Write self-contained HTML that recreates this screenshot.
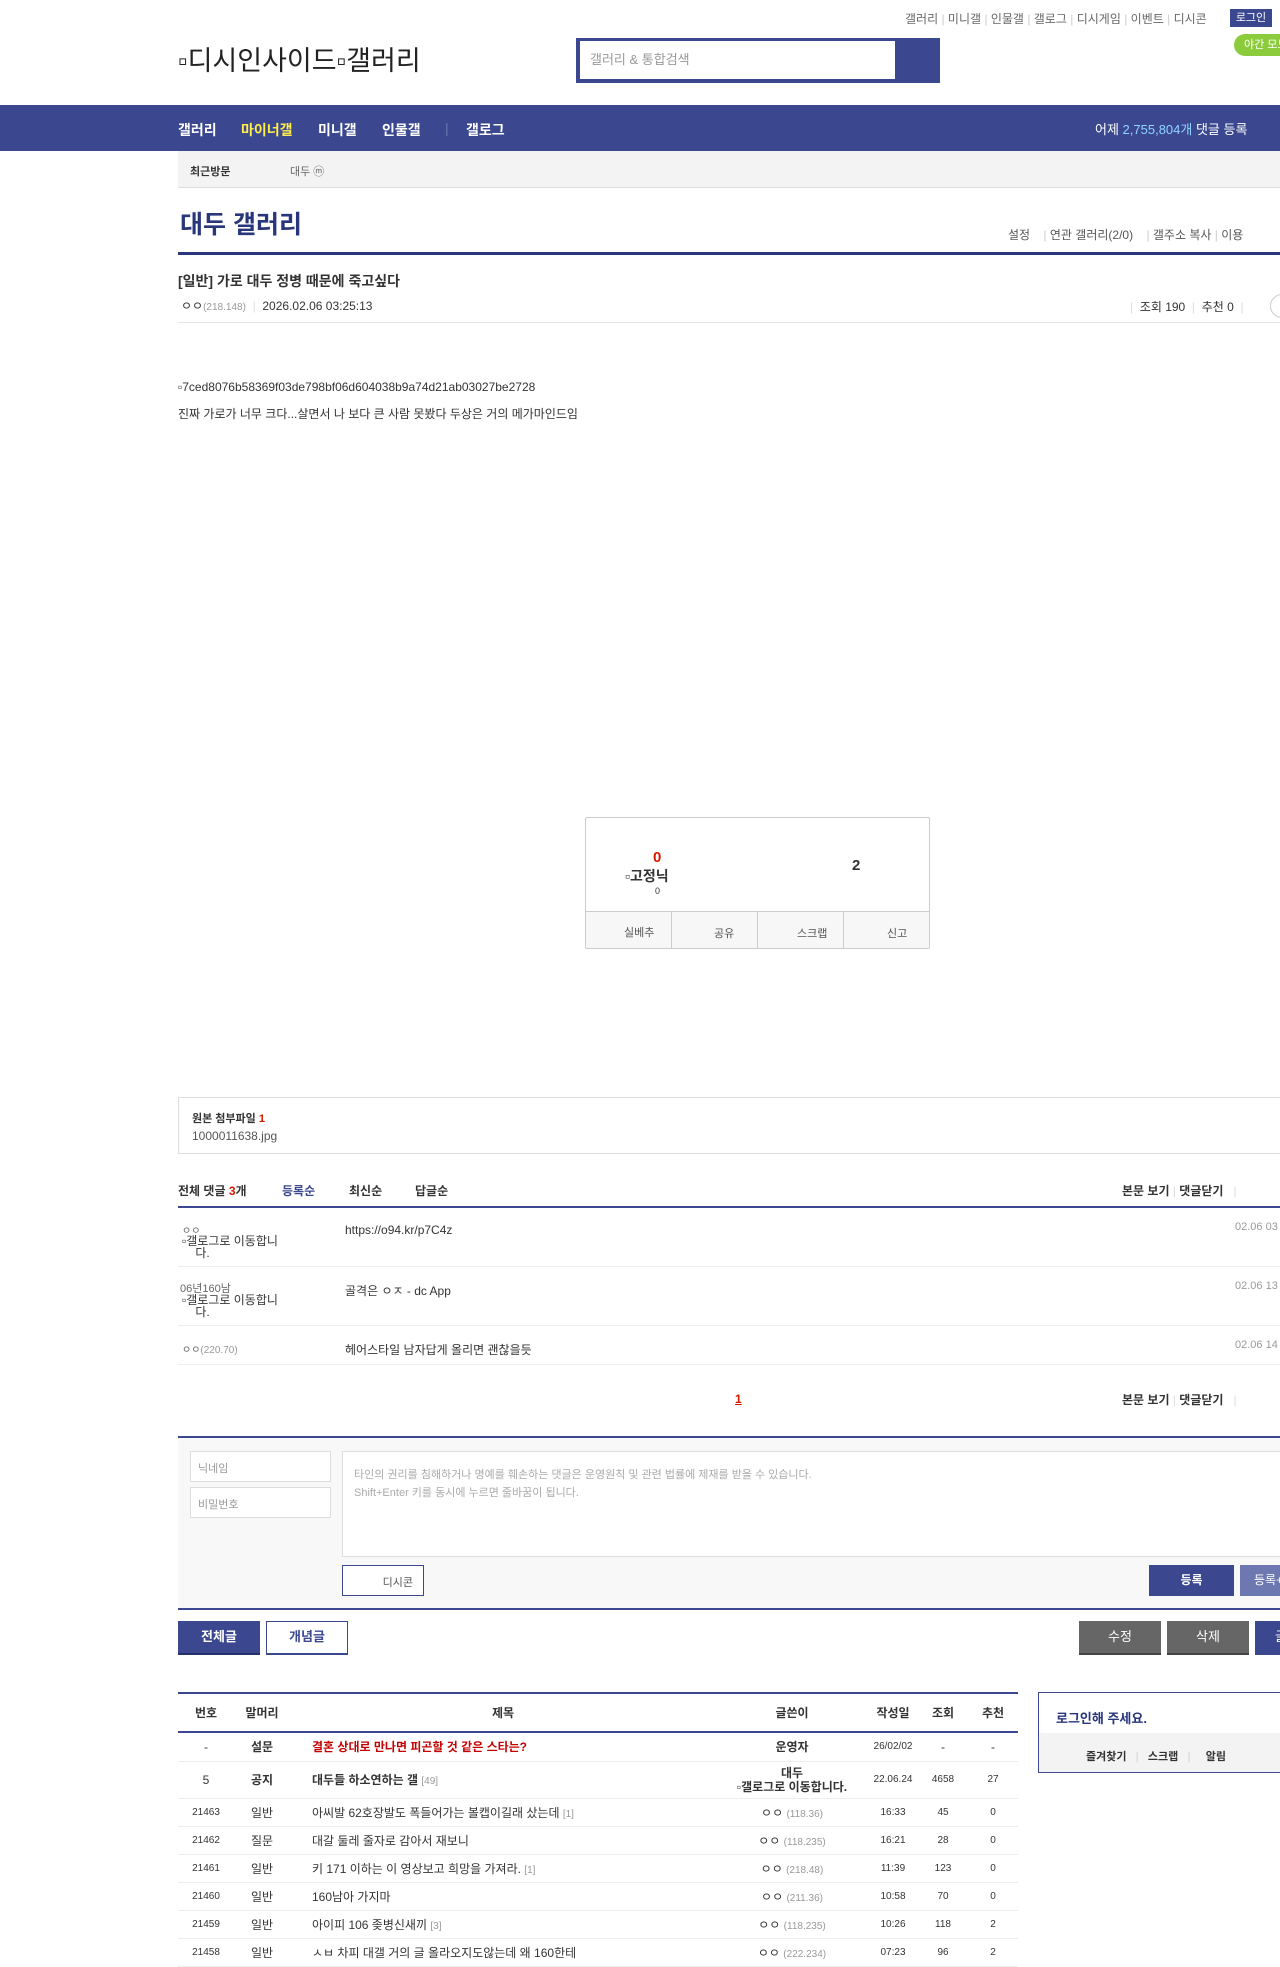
<!DOCTYPE html>
<html><head><meta charset="utf-8"><style>
*{margin:0;padding:0;box-sizing:border-box}
body{width:1280px;height:1960px;overflow:hidden;background:#fff;font-family:"Liberation Sans","Noto Sans CJK KR",sans-serif;color:#333;position:relative;font-size:12px}
.a{position:absolute;white-space:nowrap}
.navy{background:#3b4890}
table{border-collapse:collapse;table-layout:fixed}
.t td{height:28px;border-bottom:1px solid #eee;font-size:12px;text-align:center;color:#333}
.t td.s{text-align:left;padding-left:22px}
.ip{color:#999;font-size:10px}
</style></head><body>
<!-- top links -->
<div class="a" style="left:905px;top:10px;font-size:12px;color:#666">갤러리 <span style="color:#ccc">|</span> 미니갤 <span style="color:#ccc">|</span> 인물갤 <span style="color:#ccc">|</span> 갤로그 <span style="color:#ccc">|</span> 디시게임 <span style="color:#ccc">|</span> 이벤트 <span style="color:#ccc">|</span> 디시콘</div>
<div class="a navy" style="left:1230px;top:9px;width:42px;height:18px;color:#fff;font-size:11px;text-align:center;line-height:18px">로그인</div>
<div class="a" style="left:1234px;top:34px;width:60px;height:22px;background:#8ccc3c;border-radius:11px;color:#fff;font-size:11px;line-height:22px;padding-left:10px">야간 모드</div>
<div class="a" style="left:178px;top:39px;font-size:27px;color:#222">▫디시인사이드▫갤러리</div>
<div class="a" style="left:576px;top:38px;width:364px;height:45px;background:#3b4890"></div>
<div class="a" style="left:580px;top:41px;width:315px;height:38px;background:#fff;font-size:13px;color:#999;line-height:38px;padding-left:10px">갤러리 &amp; 통합검색</div>
<!-- nav -->
<div class="a navy" style="left:0;top:105px;width:1280px;height:46px"></div>
<div class="a" style="left:178px;top:120px;font-size:14px;font-weight:bold;color:#fff">갤러리</div>
<div class="a" style="left:241px;top:120px;font-size:14px;font-weight:bold;color:#ffed4a">마이너갤</div>
<div class="a" style="left:318px;top:120px;font-size:14px;font-weight:bold;color:#fff">미니갤</div>
<div class="a" style="left:382px;top:120px;font-size:14px;font-weight:bold;color:#fff">인물갤</div>
<div class="a" style="left:445px;top:120px;font-size:14px;color:#6a75b0">|</div>
<div class="a" style="left:466px;top:120px;font-size:14px;font-weight:bold;color:#fff">갤로그</div>
<div class="a" style="left:1095px;top:119px;font-size:13px;color:#fff">어제 <span style="color:#8fd3ff">2,755,804개</span> 댓글 등록</div>
<div class="a" style="top:151px;width:1280px;height:37px;background:#f3f3f3;border-bottom:1px solid #ddd;left:178px"></div>
<div class="a" style="left:190px;top:163px;font-size:11px;font-weight:bold;color:#333">최근방문</div>
<div class="a" style="left:290px;top:163px;font-size:11px;color:#666">대두 ⓜ</div>
<!-- title -->
<div class="a" style="left:180px;top:205px;font-size:25px;color:#29367c;font-weight:bold">대두 갤러리</div>
<div class="a" style="left:1008px;top:226px;font-size:12px;color:#555">설정 &nbsp;&nbsp;&nbsp;<span style="color:#ccc">|</span> 연관 갤러리(2/0) &nbsp;&nbsp;&nbsp;<span style="color:#ccc">|</span> 갤주소 복사 <span style="color:#ccc">|</span> 이용</div>
<div class="a" style="left:178px;top:252px;width:1102px;height:3px;background:#29367c"></div>
<div class="a" style="left:178px;top:271px;font-size:14px;font-weight:bold;color:#333">[일반] 가로 대두 정병 때문에 죽고싶다</div>
<div class="a" style="left:181px;top:297px;font-size:12px;color:#333">ㅇㅇ<span class="ip">(218.148)</span> &nbsp;<span style="color:#ddd">|</span> &nbsp;2026.02.06 03:25:13</div>
<div class="a" style="left:1130px;top:298px;font-size:12px;color:#333"><span style="color:#ddd">|</span> &nbsp;조회 190 &nbsp;<span style="color:#ddd">|</span> &nbsp;추천 0 &nbsp;<span style="color:#ddd">|</span></div>
<div class="a" style="left:1270px;top:294px;width:24px;height:24px;border:1px solid #ccc;border-radius:12px"></div>
<div class="a" style="left:178px;top:322px;width:1102px;height:1px;background:#e5e5e5"></div>
<div class="a" style="left:178px;top:380px;font-size:12px;color:#333">▫7ced8076b58369f03de798bf06d604038b9a74d21ab03027be2728</div>
<div class="a" style="left:178px;top:405px;font-size:12px;color:#333">진짜 가로가 너무 크다...살면서 나 보다 큰 사람 못봤다 두상은 거의 메가마인드임</div>
<!-- reco box -->
<div class="a" style="left:585px;top:817px;width:345px;height:132px;border:1px solid #ccc;border-radius:2px"></div>
<div class="a" style="left:653px;top:849px;font-size:15px;font-weight:bold;color:#d31900">0</div>
<div class="a" style="left:625px;top:866px;font-size:14px;font-weight:bold;color:#333">▫고정닉</div>
<div class="a" style="left:655px;top:886px;font-size:9px;color:#333">0</div>
<div class="a" style="left:852px;top:857px;font-size:15px;font-weight:bold;color:#333">2</div>
<div class="a" style="left:586px;top:911px;width:343px;height:37px;background:#f7f7f7;border-top:1px solid #ccc"></div>
<div class="a" style="left:671px;top:911px;width:1px;height:37px;background:#ccc"></div>
<div class="a" style="left:757px;top:911px;width:1px;height:37px;background:#ccc"></div>
<div class="a" style="left:843px;top:911px;width:1px;height:37px;background:#ccc"></div>
<div class="a" style="left:624px;top:924px;font-size:11px;color:#555">실베추</div>
<div class="a" style="left:714px;top:925px;font-size:11px;color:#555">공유</div>
<div class="a" style="left:797px;top:925px;font-size:11px;color:#555">스크랩</div>
<div class="a" style="left:887px;top:925px;font-size:11px;color:#555">신고</div>
<!-- attach -->
<div class="a" style="left:178px;top:1097px;width:1120px;height:57px;border:1px solid #ddd"></div>
<div class="a" style="left:192px;top:1110px;font-size:11px;font-weight:bold;color:#333">원본 첨부파일 <span style="color:#d31900">1</span></div>
<div class="a" style="left:192px;top:1129px;font-size:12px;color:#555">1000011638.jpg</div>
<!-- comments -->
<div class="a" style="left:178px;top:1182px;font-size:12px;font-weight:bold;color:#333">전체 댓글 <span style="color:#d31900">3</span>개</div>
<div class="a" style="left:282px;top:1182px;font-size:12px;font-weight:bold;color:#3b4890">등록순</div>
<div class="a" style="left:349px;top:1182px;font-size:12px;font-weight:bold;color:#333">최신순</div>
<div class="a" style="left:415px;top:1182px;font-size:12px;font-weight:bold;color:#333">답글순</div>
<div class="a" style="left:1122px;top:1182px;font-size:12px;font-weight:bold;color:#333">본문 보기 <span style="color:#ddd;font-weight:normal">|</span> 댓글닫기 &nbsp;&nbsp;<span style="color:#ddd;font-weight:normal">|</span></div>
<div class="a" style="left:178px;top:1206px;width:1102px;height:2px;background:#3b4890"></div>
<div class="a" style="left:182px;top:1222px;font-size:10px;color:#666">ㅇㅇ</div>
<div class="a" style="left:182px;top:1235px;font-size:12px;color:#333;line-height:12px">▫갤로그로 이동합니<br>&nbsp;&nbsp;&nbsp;&nbsp;다.</div>
<div class="a" style="left:345px;top:1223px;font-size:12px;color:#333">https://o94.kr/p7C4z</div>
<div class="a" style="left:1235px;top:1221px;font-size:11px;color:#999">02.06 03</div>
<div class="a" style="left:178px;top:1266px;width:1102px;height:1px;background:#eee"></div>
<div class="a" style="left:180px;top:1280px;font-size:11px;color:#666">06년160남</div>
<div class="a" style="left:182px;top:1294px;font-size:12px;color:#333;line-height:12px">▫갤로그로 이동합니<br>&nbsp;&nbsp;&nbsp;&nbsp;다.</div>
<div class="a" style="left:345px;top:1282px;font-size:12px;color:#333">골격은 ㅇㅈ - dc App</div>
<div class="a" style="left:1235px;top:1280px;font-size:11px;color:#999">02.06 13</div>
<div class="a" style="left:178px;top:1325px;width:1102px;height:1px;background:#eee"></div>
<div class="a" style="left:182px;top:1341px;font-size:10px;color:#666">ㅇㅇ<span class="ip">(220.70)</span></div>
<div class="a" style="left:345px;top:1341px;font-size:12px;color:#333">헤어스타일 남자답게 올리면 괜찮을듯</div>
<div class="a" style="left:1235px;top:1339px;font-size:11px;color:#999">02.06 14</div>
<div class="a" style="left:178px;top:1364px;width:1102px;height:1px;background:#eee"></div>
<div class="a" style="left:735px;top:1392px;font-size:12px;font-weight:bold;color:#d31900;text-decoration:underline">1</div>
<div class="a" style="left:1122px;top:1391px;font-size:12px;font-weight:bold;color:#333">본문 보기 <span style="color:#ddd;font-weight:normal">|</span> 댓글닫기 &nbsp;&nbsp;<span style="color:#ddd;font-weight:normal">|</span></div>
<!-- form -->
<div class="a" style="left:178px;width:1102px;height:172px;background:#f8f8f8;border-top:2px solid #3b4890;top:1436px"></div>
<div class="a" style="left:190px;top:1451px;width:141px;height:31px;background:#fff;border:1px solid #ddd;font-size:11px;color:#999;padding:8px 7px">닉네임</div>
<div class="a" style="left:190px;top:1487px;width:141px;height:31px;background:#fff;border:1px solid #ddd;font-size:11px;color:#999;padding:8px 7px">비밀번호</div>
<div class="a" style="left:342px;top:1451px;width:950px;height:106px;background:#fff;border:1px solid #ddd;font-size:11px;color:#aaa;padding:14px 11px;line-height:18px">타인의 권리를 침해하거나 명예를 훼손하는 댓글은 운영원칙 및 관련 법률에 제재를 받을 수 있습니다.<br>Shift+Enter 키를 동시에 누르면 줄바꿈이 됩니다.</div>
<div class="a" style="left:342px;top:1565px;width:82px;height:31px;background:#fff;border:1px solid #3b4890;font-size:11px;color:#555;text-align:right;padding:8px 10px">디시콘</div>
<div class="a navy" style="left:1149px;top:1565px;width:85px;height:31px;color:#fff;font-size:12px;font-weight:bold;text-align:center;line-height:31px">등록</div>
<div class="a" style="left:1240px;top:1565px;width:60px;height:31px;background:#6d77b0;color:#fff;font-size:12px;line-height:31px;padding-left:14px">등록+추천</div>
<!-- buttons -->
<div class="a" style="left:178px;top:1608px;width:1102px;height:2px;background:#3b4890"></div>
<div class="a navy" style="left:178px;top:1621px;width:82px;height:34px;color:#fff;font-size:13px;font-weight:bold;text-align:center;line-height:32px;border-bottom:2px solid #24306a">전체글</div>
<div class="a" style="left:266px;top:1621px;width:82px;height:34px;background:#fff;border:1px solid #3b4890;border-bottom:2px solid #3b4890;color:#3b4890;font-size:13px;font-weight:bold;text-align:center;line-height:30px">개념글</div>
<div class="a" style="left:1079px;top:1621px;width:82px;height:34px;background:#666;color:#fff;font-size:13px;text-align:center;line-height:32px;border-bottom:2px solid #444">수정</div>
<div class="a" style="left:1167px;top:1621px;width:82px;height:34px;background:#666;color:#fff;font-size:13px;text-align:center;line-height:32px;border-bottom:2px solid #444">삭제</div>
<div class="a navy" style="left:1255px;top:1621px;width:82px;height:34px;color:#fff;font-size:13px;line-height:32px;padding-left:20px">글쓰기</div>
<!-- list -->
<div class="a" style="left:178px;top:1692px;width:840px;height:2px;background:#3b4890"></div>
<table class="a t" style="left:178px;top:1694px;width:840px">
<colgroup><col style="width:56px"><col style="width:56px"><col><col style="width:152px"><col style="width:50px"><col style="width:50px"><col style="width:50px"></colgroup>
<tr><td style="height:38px;border-bottom:2px solid #3b4890;font-weight:bold">번호</td><td style="border-bottom:2px solid #3b4890;font-weight:bold">말머리</td><td style="border-bottom:2px solid #3b4890;font-weight:bold">제목</td><td style="border-bottom:2px solid #3b4890;font-weight:bold">글쓴이</td><td style="border-bottom:2px solid #3b4890;font-weight:bold">작성일</td><td style="border-bottom:2px solid #3b4890;font-weight:bold">조회</td><td style="border-bottom:2px solid #3b4890;font-weight:bold">추천</td></tr>
<tr><td style="height:29px">-</td><td><b>설문</b></td><td class="s" style="color:#c40000;font-weight:bold">결혼 상대로 만나면 피곤할 것 같은 스타는?</td><td><b>운영자</b></td><td style="font-size:10px">26/02/02</td><td>-</td><td>-</td></tr>
<tr><td style="height:37px">5</td><td><b>공지</b></td><td class="s"><b>대두들 하소연하는 갤</b> <span class="ip">[49]</span></td><td style="line-height:14px;white-space:nowrap"><b>대두<br>▫갤로그로 이동합니다.</b></td><td style="font-size:10px">22.06.24</td><td style="font-size:10px">4658</td><td style="font-size:10px">27</td></tr>
<tr><td style="font-size:10px">21463</td><td>일반</td><td class="s">아씨발 62호장발도 폭들어가는 볼캡이길래 샀는데 <span class="ip">[1]</span></td><td>ㅇㅇ <span class="ip">(118.36)</span></td><td style="font-size:10px">16:33</td><td style="font-size:10px">45</td><td style="font-size:10px">0</td></tr>
<tr><td style="font-size:10px">21462</td><td>질문</td><td class="s">대갈 둘레 줄자로 감아서 재보니</td><td>ㅇㅇ <span class="ip">(118.235)</span></td><td style="font-size:10px">16:21</td><td style="font-size:10px">28</td><td style="font-size:10px">0</td></tr>
<tr><td style="font-size:10px">21461</td><td>일반</td><td class="s">키 171 이하는 이 영상보고 희망을 가져라. <span class="ip">[1]</span></td><td>ㅇㅇ <span class="ip">(218.48)</span></td><td style="font-size:10px">11:39</td><td style="font-size:10px">123</td><td style="font-size:10px">0</td></tr>
<tr><td style="font-size:10px">21460</td><td>일반</td><td class="s">160남아 가지마</td><td>ㅇㅇ <span class="ip">(211.36)</span></td><td style="font-size:10px">10:58</td><td style="font-size:10px">70</td><td style="font-size:10px">0</td></tr>
<tr><td style="font-size:10px">21459</td><td>일반</td><td class="s">아이피 106 좆병신새끼 <span class="ip">[3]</span></td><td>ㅇㅇ <span class="ip">(118.235)</span></td><td style="font-size:10px">10:26</td><td style="font-size:10px">118</td><td style="font-size:10px">2</td></tr>
<tr><td style="font-size:10px">21458</td><td>일반</td><td class="s">ㅅㅂ 차피 대갤 거의 글 올라오지도않는데 왜 160한테</td><td>ㅇㅇ <span class="ip">(222.234)</span></td><td style="font-size:10px">07:23</td><td style="font-size:10px">96</td><td style="font-size:10px">2</td></tr>
</table>
<!-- login box -->
<div class="a" style="left:1038px;top:1692px;width:260px;height:81px;border:1px solid #3b4890"></div>
<div class="a" style="left:1039px;top:1733px;width:250px;height:39px;background:#f3f3f3"></div>
<div class="a" style="left:1056px;top:1708px;font-size:13px;font-weight:bold;color:#29367c">로그인해 주세요.</div>
<div class="a" style="left:1086px;top:1748px;font-size:11px;font-weight:bold;color:#333">즐겨찾기 &nbsp;&nbsp;<span style="color:#ddd">|</span>&nbsp;&nbsp; 스크랩 &nbsp;&nbsp;<span style="color:#ddd">|</span>&nbsp;&nbsp;&nbsp;&nbsp; 알림</div>
</body></html>
